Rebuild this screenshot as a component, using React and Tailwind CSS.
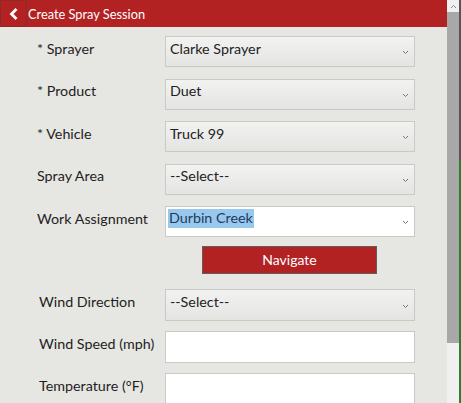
import React from 'react';

const font = { fontFamily: 'Lato, "Noto Sans", sans-serif' };

function Chevron() {
  return (
    <svg width="7" height="5" viewBox="0 0 7 5" className="shrink-0 mt-[2px]">
      <polyline points="1,1 3.5,3.5 6,1" fill="none" stroke="#777" strokeWidth="1" />
    </svg>
  );
}

function SelectBox({ value }) {
  return (
    <div className="w-[250px] h-full flex items-center justify-between pl-[4px] pr-[5px] border border-[#c9c9c6] bg-gradient-to-b from-[#f2f2f1] to-[#e4e4e3]">
      <span className="text-[14.3px] text-[#222] leading-none pb-[5px]">{value}</span>
      <Chevron />
    </div>
  );
}

function Row({ label, children, labelPad = 'pl-[37px]', h = 'h-[31px]' }) {
  return (
    <div className={`flex items-center ${h}`}>
      <div className={`w-[165px] ${labelPad} pb-[5px] text-[14.3px] leading-none text-[#1e1e1e] whitespace-nowrap`}>
        {label}
      </div>
      {children}
    </div>
  );
}

export default function App() {
  return (
    <div className="w-[461px] h-[403px] flex overflow-hidden bg-[#e6e6e2]" style={font}>
      <div className="w-[447px] flex flex-col">
        <div className="h-[27px] bg-[#b22222] flex items-center">
          <div className="w-[27px] h-[27px] border border-[#8e2a22] flex items-center justify-center">
            <svg width="10" height="12" viewBox="0 0 10 12">
              <polyline points="7.5,1 2.5,6 7.5,11" fill="none" stroke="white" strokeWidth="2.8" />
            </svg>
          </div>
          <span className="ml-[1px] pt-[2px] text-[12.8px] text-white">Create Spray Session</span>
        </div>

        <div className="flex flex-col gap-[11.5px] mt-[9px]">
          <Row label="* Sprayer">
            <SelectBox value="Clarke Sprayer" />
          </Row>
          <Row label="* Product">
            <SelectBox value="Duet" />
          </Row>
          <Row label="* Vehicle">
            <SelectBox value="Truck 99" />
          </Row>
          <Row label="Spray Area">
            <SelectBox value="--Select--" />
          </Row>
          <Row label="Work Assignment">
            <div className="w-[250px] h-full flex items-center justify-between pl-[2px] pr-[5px] border border-[#c9c9c6] bg-white">
              <span className="text-[14.3px] text-[#1f3a5c] leading-none bg-[#99c8ee] px-[1px] pt-[2px] pb-[3px] mb-[6px]">
                Durbin Creek
              </span>
              <Chevron />
            </div>
          </Row>
        </div>

        <div className="flex mt-[9px] pl-[202px]">
          <button className="w-[175px] h-[28px] bg-[#b22222] border border-[#5d5d5d] text-white text-[14px] leading-none">
            Navigate
          </button>
        </div>

        <div className="flex flex-col gap-[10px] mt-[15px]">
          <Row label="Wind Direction" labelPad="pl-[39px]" h="h-[32px]">
            <SelectBox value="--Select--" />
          </Row>
          <Row label="Wind Speed (mph)" labelPad="pl-[39px]" h="h-[32px]">
            <div className="w-[250px] h-full border border-[#c9c9c6] bg-white" />
          </Row>
          <Row label="Temperature (°F)" labelPad="pl-[39px]" h="h-[32px]">
            <div className="w-[250px] h-full border border-[#c9c9c6] bg-white" />
          </Row>
        </div>
      </div>

      <div className="w-[12px] flex flex-col bg-[#f0f0f0]">
        <div className="h-[12px] flex items-center justify-center">
          <svg width="7" height="5" viewBox="0 0 7 5">
            <polyline points="1,4 3.5,1.5 6,4" fill="none" stroke="#888" strokeWidth="1" />
          </svg>
        </div>
        <div className="h-[331px] bg-[#a8a8a8]" />
      </div>
      <div className="w-[2px] flex flex-col bg-[#2f7d2f]">
        <div className="h-[160px] bg-[#555]" />
      </div>
    </div>
  );
}
